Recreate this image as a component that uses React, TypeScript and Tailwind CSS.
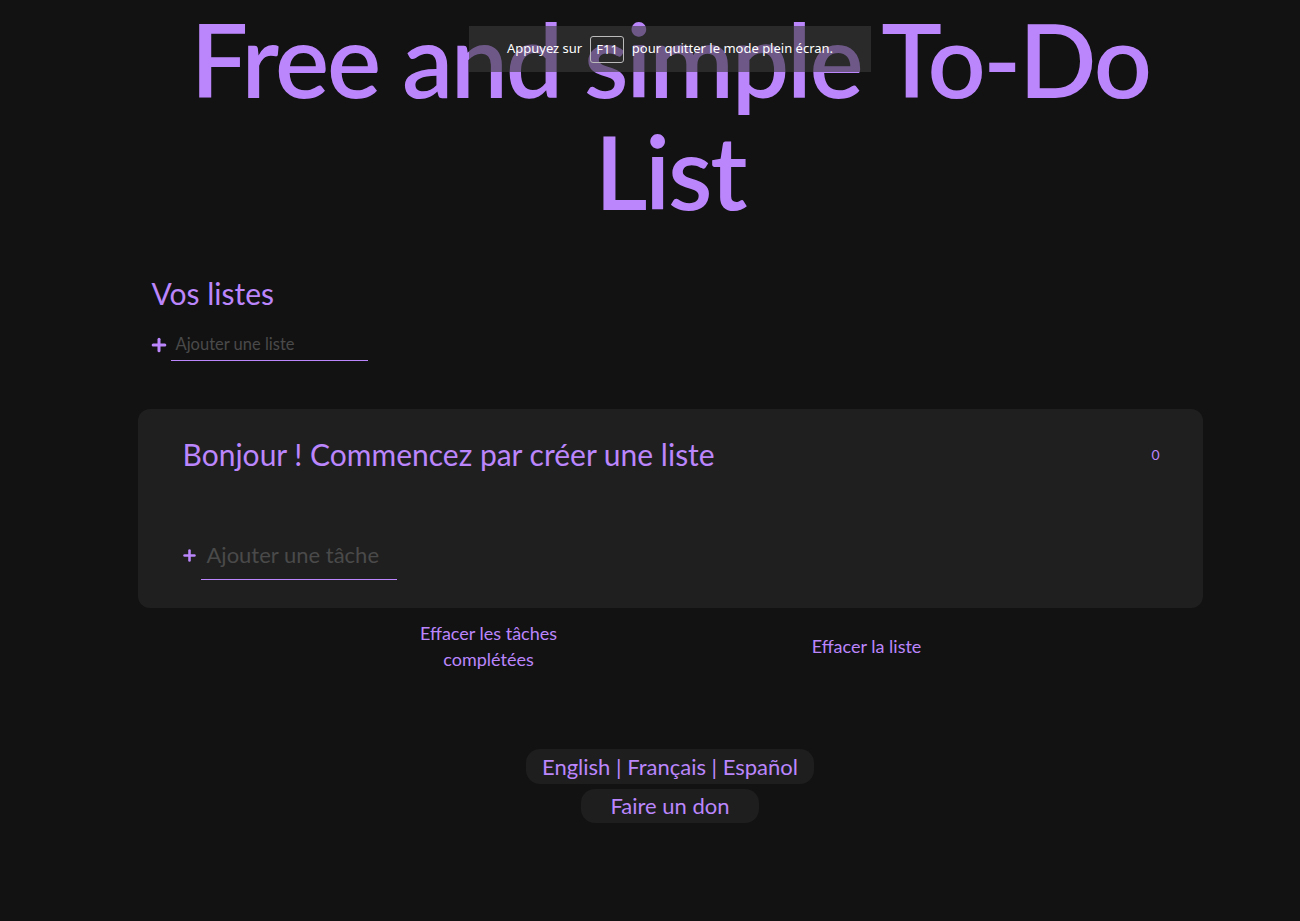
import { Plus } from "lucide-react";

const App = () => {
  return (
    <div className="relative min-h-[921px] bg-[#121212] pl-[40px] font-['Lato',sans-serif] text-[#bb86fc]">
      {/* fullscreen hint overlay */}
      <div className="absolute left-[469px] top-[26px] flex h-[46px] w-[402px] items-center justify-center gap-2 bg-[#3a3a3a]/60 text-[13px] text-white font-['Noto_Sans',sans-serif]">
        <span>Appuyez sur</span>
        <span className="rounded-[3px] border border-[#bbb] px-[5px] py-[6px] leading-none">F11</span>
        <span>pour quitter le mode plein écran.</span>
      </div>

      <h1 className="mx-auto w-[1010px] pt-[3px] text-center text-[102px] font-semibold leading-[112px] tracking-[-2.3px]">
        Free and simple To-Do List
      </h1>

      <div className="mx-auto mt-[48px] w-[1065px]">
        <div className="px-[14px]">
          <h2 className="text-[30px] leading-[36px]">Vos listes</h2>
          <div className="mt-[23px] flex items-start gap-[2px]">
            <Plus className="-ml-[3px] mt-[1px] h-[20px] w-[20px]" strokeWidth={3.6} />
            <div className="w-[197px]">
              <div className="pl-[5px] text-[16.5px] leading-[20px] text-[#4a4a4a]">Ajouter une liste</div>
              <div className="mt-[6px] h-px bg-[#bb86fc]" />
            </div>
          </div>
        </div>

        <div className="mt-[48px] h-[199px] rounded-[12px] bg-[#1f1f1f] px-[45px] pt-[27px]">
          <div className="flex items-center justify-between">
            <h3 className="text-[30px] leading-[36px]">Bonjour ! Commencez par créer une liste</h3>
            <span className="mr-[-2px] text-[14px]">0</span>
          </div>
          <div className="mt-[70px] flex items-start gap-[3px]">
            <Plus className="-ml-[2px] mt-[5px] h-[17px] w-[17px]" strokeWidth={3.6} />
            <div className="w-[196px]">
              <div className="pl-[6px] text-[22px] leading-[26px] text-[#4a4a4a]">Ajouter une tâche</div>
              <div className="mt-[11px] h-px bg-[#bb86fc]" />
            </div>
          </div>
        </div>

        <div className="mt-[12px] flex items-center">
          <button className="ml-[271px] w-[160px] text-center text-[18px] leading-[26px]">
            Effacer les tâches complétées
          </button>
          <button className="ml-[218px] w-[160px] text-center text-[18px] leading-[26px]">Effacer la liste</button>
        </div>
      </div>

      <div className="mt-[77px] flex flex-col items-center gap-[5px]">
        <div className="rounded-[14px] bg-[#1e1e1e] px-[16px] py-[2px] text-[22px] leading-[31px]">
          English | Français | Español
        </div>
        <div className="rounded-[14px] bg-[#1e1e1e] px-[29px] py-[2px] text-[22px] leading-[30px]">
          Faire un don
        </div>
      </div>
    </div>
  );
};

export default App;
